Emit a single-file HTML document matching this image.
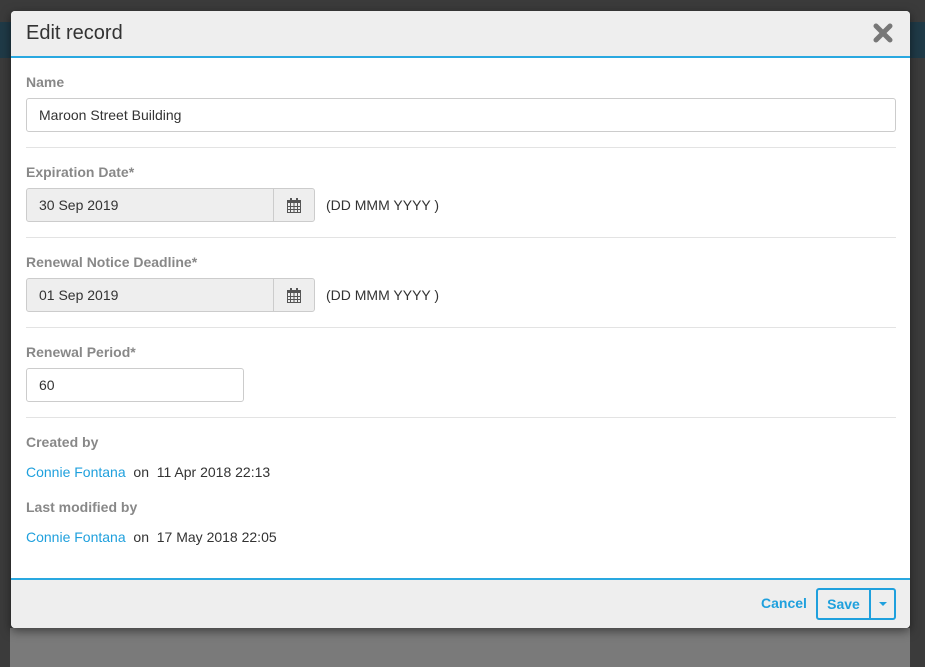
<!DOCTYPE html>
<html><head><style>
*{box-sizing:border-box;margin:0;padding:0}
body{width:925px;height:667px;overflow:hidden;background:#3b3b3b;font-family:"Liberation Sans",Arial,sans-serif;position:relative}
.under{position:absolute;left:10px;top:628px;width:900px;height:39px;background:#7a7a7a}
.topbar{position:absolute;left:0;top:22px;width:925px;height:36px;background:#1f3a47}
.modal{position:absolute;left:11px;top:11px;width:899px;height:617px;background:#fff;border-radius:4px;overflow:hidden;box-shadow:0 3px 10px rgba(0,0,0,.5)}
.hd{height:47px;background:#eee;border-bottom:2px solid #29a8e0;position:relative}
.hd h1{font-size:20px;font-weight:normal;color:#333;position:absolute;left:15px;top:11px}
.x{position:absolute;right:16px;top:11px;width:22px;height:22px}
.body{position:absolute;left:15px;top:47px;width:870px}
.lbl{font-size:14px;font-weight:bold;color:#888;position:absolute}
.inp{position:absolute;border:1px solid #ccc;border-radius:3px;height:34px;font-size:14px;color:#333;padding:8px 12px;background:#fff}
.dis{background:#eee}
.cal{position:absolute;border-left:1px solid #ccc;right:0;top:0;width:41px;height:32px;display:flex;align-items:center;justify-content:center}
.hint{position:absolute;font-size:14px;color:#333}
.hr{position:absolute;left:0;width:870px;height:1px;background:#e3e3e3}
.t{position:absolute;font-size:14px;color:#333}
.t a{color:#1fa0dd;text-decoration:none}
.ft{position:absolute;left:0;top:567px;width:899px;height:50px;background:#eee;border-top:2px solid #29a8e0}
.cancel{position:absolute;left:750px;top:15px;color:#1fa0dd;font-size:14px;font-weight:bold}
.save{position:absolute;left:805px;top:8px;width:80px;height:32px;border:2px solid #1fa0dd;border-radius:3px;display:flex}
.save span{color:#1fa0dd;font-weight:bold;font-size:14px;width:53px;text-align:center;line-height:28px;border-right:2px solid #1fa0dd}
.save i{flex:1;position:relative}
.save i:after{content:"";position:absolute;left:8px;top:12px;border:4px solid transparent;border-top:4px solid #1fa0dd;border-bottom:0}
</style></head><body>
<div class="topbar"></div>
<div class="under"></div>
<div class="modal">
<div class="hd"><h1>Edit record</h1>
<svg class="x" viewBox="0 0 22 22"><path d="M4 4L18 18M18 4L4 18" stroke="#777" stroke-width="5" stroke-linecap="round"/></svg></div>
<div class="body">
<div class="lbl" style="top:16px">Name</div>
<div class="inp" style="top:40px;left:0;width:870px">Maroon Street Building</div>
<div class="hr" style="top:89px"></div>
<div class="lbl" style="top:106px">Expiration Date*</div>
<div class="inp dis" style="top:130px;left:0;width:289px">30 Sep 2019<div class="cal"><svg width="14" height="15" viewBox="0 0 14 15"><rect x="0.5" y="2.5" width="13" height="12" fill="none" stroke="#555"/><rect x="0" y="2" width="14" height="3" fill="#555"/><rect x="3" y="0" width="2" height="4" fill="#555"/><rect x="9" y="0" width="2" height="4" fill="#555"/><path d="M0 8.5H14M0 11.5H14M3.5 5V15M7 5V15M10.5 5V15" stroke="#555"/></svg></div></div>
<div class="hint" style="top:139px;left:300px">(DD MMM YYYY )</div>
<div class="hr" style="top:179px"></div>
<div class="lbl" style="top:196px">Renewal Notice Deadline*</div>
<div class="inp dis" style="top:220px;left:0;width:289px">01 Sep 2019<div class="cal"><svg width="14" height="15" viewBox="0 0 14 15"><rect x="0.5" y="2.5" width="13" height="12" fill="none" stroke="#555"/><rect x="0" y="2" width="14" height="3" fill="#555"/><rect x="3" y="0" width="2" height="4" fill="#555"/><rect x="9" y="0" width="2" height="4" fill="#555"/><path d="M0 8.5H14M0 11.5H14M3.5 5V15M7 5V15M10.5 5V15" stroke="#555"/></svg></div></div>
<div class="hint" style="top:229px;left:300px">(DD MMM YYYY )</div>
<div class="hr" style="top:269px"></div>
<div class="lbl" style="top:286px">Renewal Period*</div>
<div class="inp" style="top:310px;left:0;width:218px">60</div>
<div class="hr" style="top:359px"></div>
<div class="lbl" style="top:376px">Created by</div>
<div class="t" style="top:406px"><a>Connie Fontana</a>&nbsp; on&nbsp; 11 Apr 2018 22:13</div>
<div class="lbl" style="top:441px">Last modified by</div>
<div class="t" style="top:471px"><a>Connie Fontana</a>&nbsp; on&nbsp; 17 May 2018 22:05</div>
</div>
<div class="ft"><div class="cancel">Cancel</div><div class="save"><span>Save</span><i></i></div></div>
</div>
</body></html>
